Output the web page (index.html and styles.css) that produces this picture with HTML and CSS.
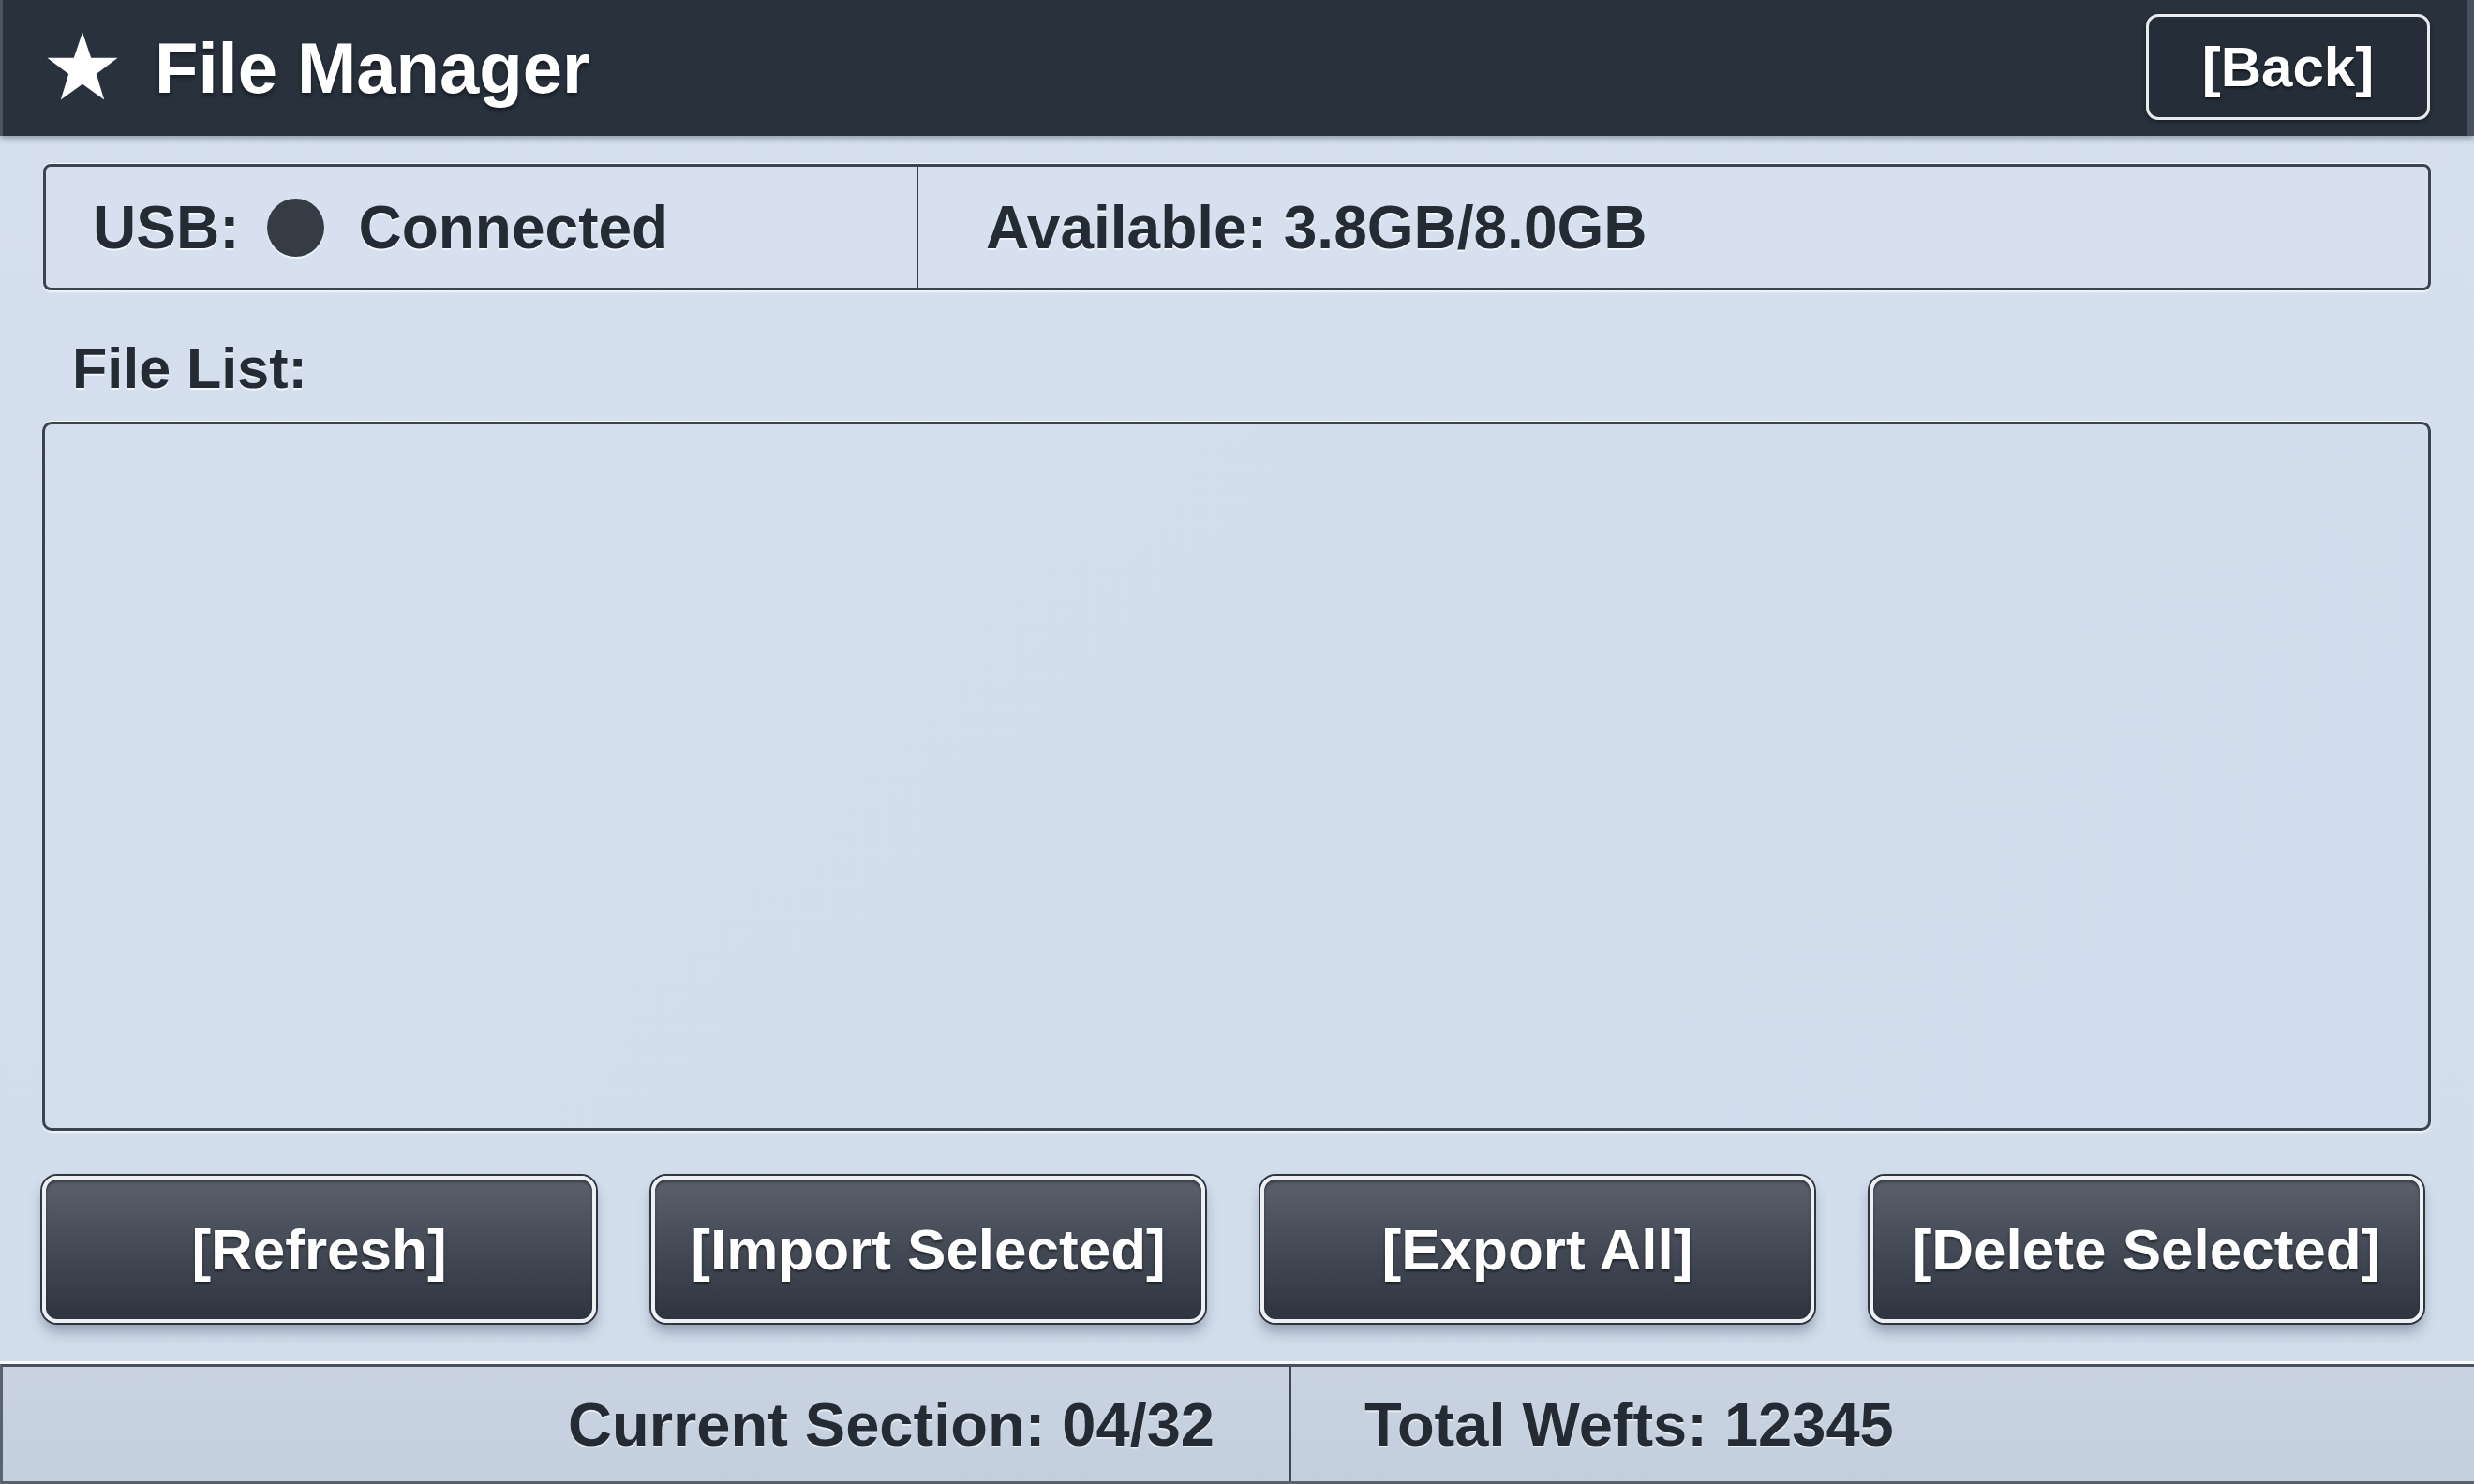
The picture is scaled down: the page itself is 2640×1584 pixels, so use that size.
FILE: index.html
```html
<!DOCTYPE html>
<html lang="en">
<head>
<meta charset="utf-8">
<title>File Manager</title>
<link rel="stylesheet" href="styles.css">
</head>
<body>
<div class="app">
  <header class="topbar">
    <div class="title">
      <svg class="star" viewBox="0 0 100 100" aria-hidden="true">
        <polygon points="50,2 61.5,36 97,36 68.5,57.5 79,92 50,71 21,92 31.5,57.5 3,36 38.5,36" fill="#ffffff"/>
      </svg>
      <span class="title-text">File Manager</span>
    </div>
    <button class="back-btn">[Back]</button>
  </header>

  <main class="content">
    <section class="status">
      <div class="status-cell usb">
        <span class="usb-label">USB:</span>
        <span class="dot"></span>
        <span>Connected</span>
      </div>
      <div class="status-cell avail">Available: 3.8GB/8.0GB</div>
    </section>

    <div class="list-label">File List:</div>
    <div class="file-list"></div>

    <div class="actions">
      <button class="action-btn">[Refresh]</button>
      <button class="action-btn">[Import Selected]</button>
      <button class="action-btn">[Export All]</button>
      <button class="action-btn">[Delete Selected]</button>
    </div>
  </main>

  <footer class="footer">
    <div class="foot-cell left">Current Section: 04/32</div>
    <div class="foot-cell right">Total Wefts: 12345</div>
  </footer>
</div>
</body>
</html>
```

FILE: styles.css
```css
* { box-sizing: border-box; }

html, body {
  margin: 0;
  padding: 0;
}

body {
  width: 2640px;
  height: 1584px;
  overflow: hidden;
  background: #d3deed;
  font-family: "Liberation Sans", Arial, sans-serif;
  font-weight: bold;
  color: #252b34;
}

.app {
  display: flex;
  flex-direction: column;
  height: 1584px;
  background: linear-gradient(180deg, #d5dfee 0%, #d2ddec 100%);
}

/* Header */
.topbar {
  height: 145px;
  flex: 0 0 145px;
  display: flex;
  align-items: center;
  justify-content: space-between;
  padding: 0 39px 0 45px;
  background: #28313c;
  border-left: 3px solid #4b5462;
  border-right: 8px solid #48515e;
  box-shadow: 0 3px 6px rgba(20, 30, 45, 0.35);
  position: relative;
  z-index: 1;
}

.title {
  display: flex;
  align-items: center;
  gap: 37px;
}

.star {
  width: 80px;
  height: 80px;
  display: block;
}

.title-text {
  color: #ffffff;
  font-size: 76px;
  line-height: 1;
  text-shadow: 0 3px 4px rgba(0, 0, 0, 0.45);
}

.back-btn {
  width: 303px;
  height: 113px;
  margin-top: -2px;
  background: #252d38;
  border: 3px solid #e8ebef;
  border-radius: 13px;
  color: #ffffff;
  font-family: "Liberation Sans", Arial, sans-serif;
  font-weight: bold;
  font-size: 60px;
  line-height: 1;
  padding: 0;
  text-shadow: 0 2px 3px rgba(0, 0, 0, 0.5);
  box-shadow: 0 2px 4px rgba(0, 0, 0, 0.4);
}

/* Content */
.content {
  flex: 1 1 auto;
  display: flex;
  flex-direction: column;
  padding: 30px 46px 0 45px;
}

.status {
  height: 135px;
  display: grid;
  grid-template-columns: 931px 1fr;
  border: 3px solid #3b434f;
  border-radius: 8px;
  background: #d6e0ee;
  box-shadow: 0 -1px 0 rgba(255, 255, 255, 0.8), 0 2px 2px rgba(255, 255, 255, 0.7);
  margin-left: 1px;
}

.status-cell {
  display: flex;
  align-items: center;
  font-size: 64px;
  line-height: 1;
  text-shadow: 0 2px 1px rgba(255, 255, 255, 0.75);
}

.usb {
  padding-left: 50px;
  border-right: 2px solid #3b434f;
}

.dot {
  width: 61px;
  height: 62px;
  border-radius: 50%;
  background: #363c46;
  margin-left: 30px;
  margin-right: 36px;
  box-shadow: 0 2px 1px rgba(255, 255, 255, 0.7);
}

.avail {
  padding-left: 72px;
}

.list-label {
  font-size: 61px;
  line-height: 62px;
  height: 62px;
  margin: 52px 0 26px 32px;
  text-shadow: 0 2px 1px rgba(255, 255, 255, 0.75);
}

.file-list {
  height: 757px;
  border: 3px solid #3b434f;
  border-radius: 10px;
  background: linear-gradient(135deg, #d4dfed 0%, #d1dcec 100%);
  box-shadow: 0 -1px 0 rgba(255, 255, 255, 0.8), 0 2px 2px rgba(255, 255, 255, 0.7);
}

/* Buttons */
.actions {
  display: grid;
  grid-template-columns: repeat(4, 591px);
  column-gap: 59px;
  margin-top: 48px;
  height: 157px;
}

.action-btn {
  height: 157px;
  border: 4px solid #eef0f3;
  border-radius: 16px;
  background: linear-gradient(180deg, #5a616c 0%, #454c57 45%, #2f3540 100%);
  color: #ffffff;
  font-family: "Liberation Sans", Arial, sans-serif;
  font-weight: bold;
  font-size: 62px;
  line-height: 1;
  padding: 0;
  text-shadow: 0 2px 3px rgba(0, 0, 0, 0.55);
  box-shadow:
    0 0 0 2px #2f3640,
    inset 0 3px 3px rgba(0, 0, 0, 0.35),
    0 10px 14px rgba(40, 52, 72, 0.35);
}

/* Footer */
.footer {
  flex: 0 0 128px;
  height: 128px;
  display: grid;
  grid-template-columns: 1375px 1fr;
  background: linear-gradient(180deg, #c9d3e1 0%, #c4cfdd 100%);
  border-top: 3px solid #48505b;
  border-left: 3px solid #5a626d;
  border-bottom: 3px solid #5a626d;
  box-shadow: 0 -3px 0 rgba(255, 255, 255, 0.8);
}

.foot-cell {
  display: flex;
  align-items: center;
  font-size: 65px;
  line-height: 1;
  text-shadow: 0 2px 1px rgba(255, 255, 255, 0.6);
}

.foot-cell.left {
  justify-content: flex-end;
  padding-right: 80px;
  border-right: 2px solid #3f4753;
}

.foot-cell.right {
  padding-left: 78px;
}
```
